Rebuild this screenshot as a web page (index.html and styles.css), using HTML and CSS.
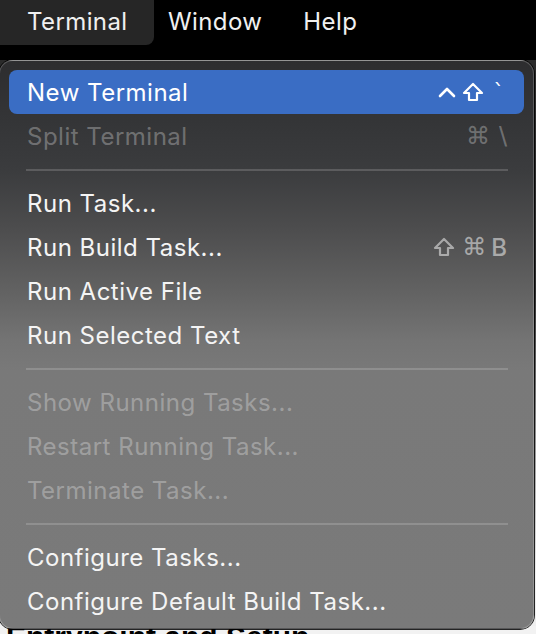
FILE: index.html
```html
<!DOCTYPE html>
<html>
<head>
<meta charset="utf-8">
<link rel="stylesheet" href="styles.css">
</head>
<body>
<div class="menubar">
  <div class="mb-item active">Terminal</div>
  <div class="mb-item">Window</div>
  <div class="mb-item">Help</div>
</div>
<div class="doc">
  <div class="doc-text">Entrypoint and Setup</div>
</div>
<div class="menu">
  <div class="item hl"><span class="label">New Terminal</span><span class="keys">
    <svg class="k-caret" viewBox="0 0 18 12"><polyline points="2,10 9,3 16,10"/></svg>
    <svg class="k-shift" viewBox="0 0 22 20"><path d="M11 2 L20 11 H15 V18 H7 V11 H2 Z"/></svg>
    <span class="k-txt tick">`</span></span></div>
  <div class="item dis"><span class="label">Split Terminal</span><span class="keys"><span class="k-txt cmd">⌘</span><span class="k-txt slash">\</span></span></div>
  <div class="sep"></div>
  <div class="item"><span class="label">Run Task...</span></div>
  <div class="item"><span class="label">Run Build Task...</span><span class="keys dim">
    <svg class="k-shift" viewBox="0 0 22 20"><path d="M11 2 L20 11 H15 V18 H7 V11 H2 Z"/></svg>
    <span class="k-txt cmd">⌘</span><span class="k-b">B</span></span></div>
  <div class="item"><span class="label">Run Active File</span></div>
  <div class="item"><span class="label">Run Selected Text</span></div>
  <div class="sep"></div>
  <div class="item dis"><span class="label">Show Running Tasks...</span></div>
  <div class="item dis"><span class="label">Restart Running Task...</span></div>
  <div class="item dis"><span class="label">Terminate Task...</span></div>
  <div class="sep"></div>
  <div class="item"><span class="label">Configure Tasks...</span></div>
  <div class="item"><span class="label">Configure Default Build Task...</span></div>
</div>
</body>
</html>
```
FILE: styles.css
```css
* { box-sizing: border-box; }
html, body { margin: 0; padding: 0; }
body {
  width: 536px;
  height: 634px;
  overflow: hidden;
  position: relative;
  background: #f2f2f2;
  font-family: Inter, "Noto Sans", sans-serif;
}
.menubar {
  height: 60px;
  background: #000;
  display: flex;
  align-items: flex-start;
}
.mb-item {
  height: 45px;
  display: flex;
  align-items: center;
  padding: 0 0 2px 0;
  color: #f0f0f0;
  font-size: 24px;
  letter-spacing: 0.4px;
}
.mb-item.active {
  background: #262626;
  border-radius: 0 0 8px 0;
  width: 154px;
  padding-left: 27px;
}
.mb-item:nth-child(2) { margin-left: 14px; }
.mb-item:nth-child(3) { margin-left: 41px; }
.doc {
  height: 574px;
  background: linear-gradient(#2a2a2a 0%, #303030 40%, #efefef 90%);
  display: flex;
  flex-direction: column;
  justify-content: flex-end;
}
.doc-text {
  height: 8px;
  background: #f2f2f2;
  padding-left: 6px;
  font-family: "Liberation Sans", sans-serif;
  font-weight: bold;
  font-size: 30px;
  line-height: 22px;
  color: #000;
  white-space: nowrap;
  overflow: hidden;
}
.menu {
  position: absolute;
  top: 60px;
  left: -1px;
  width: 535px;
  height: 569px;
  border-radius: 14px;
  background: linear-gradient(#2d2d2f 0px, #343537 60px, #3b3c3e 110px, #4c4c4d 165px, #626262 230px, #747474 280px, #797979 310px, #7a7a7a 569px);
  border: 1px solid rgba(255,255,255,0.2);
  box-shadow: 0 0 0 1px rgba(0,0,0,0.85);
  padding: 9px 9px 0 9px;
  display: flex;
  flex-direction: column;
}
.item {
  height: 44px;
  flex: none;
  display: flex;
  align-items: center;
  justify-content: space-between;
  padding: 0 17px 0 18px;
  color: #f4f4f4;
  font-size: 24px;
  border-radius: 8px;
}
.item .label { letter-spacing: 0.5px; }
.item.hl { background: #3a6dc4; color: #fff; }
.item.dis { color: rgba(255,255,255,0.3); }
.sep {
  flex: none;
  height: 23px;
  display: flex;
  align-items: center;
  padding: 0 16px 0 17px;
}
.sep::before {
  content: "";
  display: block;
  width: 100%;
  height: 2px;
  background: rgba(255,255,255,0.17);
}
.keys {
  display: flex;
  align-items: center;
  gap: 7px;
  color: inherit;
}
.keys.dim { color: rgba(255,255,255,0.5); }
.k-txt {
  font-family: "DejaVu Sans", sans-serif;
  font-size: 21px;
}
.k-txt.cmd { font-size: 24px; }
.k-txt.slash { font-size: 24px; margin-left: 2px; }
.k-txt.tick { margin-left: 3px; margin-right: 3px; }
.k-b { font-size: 24px; font-weight: 500; margin-left: -2px; }
.k-caret { width: 18px; height: 12px; margin-right: -1px; }
.k-caret polyline { fill: none; stroke: currentColor; stroke-width: 2.6; stroke-linecap: round; stroke-linejoin: round; }
.k-shift { width: 22px; height: 20px; }
.k-shift path { fill: none; stroke: currentColor; stroke-width: 2.2; stroke-linejoin: round; }
```
